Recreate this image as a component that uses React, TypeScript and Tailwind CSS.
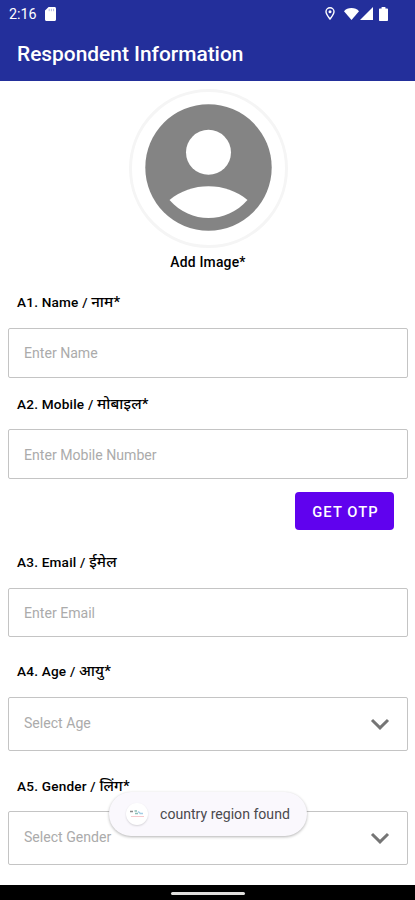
interface FieldProps {
  label: string;
  hindi: string;
  required?: boolean;
  placeholder: string;
  labelClass: string;
  boxClass: string;
  select?: boolean;
}

function StatusBar() {
  return (
    <div className="flex h-[27px] items-center pl-[9px] pr-[27px] text-white">
      <span className="pt-[2px] text-[14.300px] leading-none">2:16</span>
      <svg className="ml-[8px]" width="11" height="14" viewBox="0 0 11 14" fill="currentColor">
        <path d="M3.6 0H9.5C10.4 0 11 .6 11 1.5v11c0 .9-.6 1.5-1.5 1.5h-8C.6 14 0 13.4 0 12.5V3.6z" />
        <path d="M4.2 1.8v2.4M6.4 1.8v2.4M8.6 1.8v2.4" stroke="#b4b9e2" strokeWidth="1" />
      </svg>
      <svg className="ml-auto" width="10" height="13" viewBox="0 0 10 13" fill="none" stroke="currentColor">
        <path d="M5 12C3 9.3 1 7 1 4.700a4 4 0 0 1 8 0C9 7 7 9.300 5 12z" strokeWidth="1.400" />
        <circle cx="5" cy="4.800" r="1.500" fill="currentColor" stroke="none" />
      </svg>
      <svg className="ml-[9px]" width="15" height="12" viewBox="0 0 15 12" fill="currentColor">
        <path d="M7.500 12L0 3.300C1.700 1.100 4.400 0 7.500 0s5.800 1.100 7.500 3.300z" />
      </svg>
      <svg className="ml-[1px]" width="13" height="13" viewBox="0 0 13 13" fill="currentColor">
        <path d="M13 0v13H0z" />
      </svg>
      <svg className="ml-[6px]" width="9" height="14" viewBox="0 0 9 14" fill="currentColor">
        <path d="M2.600 0h3.800v1.400H8c.6 0 1 .4 1 1V13c0 .6-.4 1-1 1H1c-.6 0-1-.4-1-1V2.400c0-.6.4-1 1-1h1.600z" />
      </svg>
    </div>
  );
}

function Avatar() {
  return (
    <div className="flex size-[159px] items-center justify-center rounded-full border-[3px] border-[#f5f5f5] pb-[2px]">
      <svg width="127" height="127" viewBox="0 0 127 127">
        <circle cx="63.500" cy="63.500" r="63.200" fill="#848484" />
        <circle cx="63.500" cy="48.300" r="22.500" fill="#fff" />
        <path d="M24.500 96C46 77.500 81 77.500 102.500 96C81 120 46 120 24.500 96z" fill="#fff" />
      </svg>
    </div>
  );
}

function Field({ label, hindi, required, placeholder, labelClass, boxClass, select }: FieldProps) {
  return (
    <div>
      <div className={`flex items-center pl-[9px] text-[13.600px] font-medium tracking-[0.2px] text-black ${labelClass}`}>
        <p className="whitespace-nowrap leading-5">
          {label} / <span className="text-[15px] leading-none">{hindi}</span>
          {required && <span className="text-[15px] leading-none">*</span>}
        </p>
      </div>
      <div
        className={`flex items-center justify-between rounded-[2px] border-[1.500px] border-[#c4c4c4] pl-[15px] pr-[17px] text-[14.100px] text-[#ababab] ${boxClass}`}
      >
        <span>{placeholder}</span>
        {select && (
          <svg width="20" height="12" viewBox="0 0 20 12" fill="none" stroke="#757575" strokeWidth="3">
            <path d="M2 2l8 7.800L18 2" />
          </svg>
        )}
      </div>
    </div>
  );
}

function Toast() {
  return (
    <div className="absolute left-[109px] top-[792px] flex h-[44px] w-[198px] items-center rounded-[22px] bg-[#faf8fd] pl-[17px] text-[14.100px] text-[#4b4a4d] shadow-[0_1px_3px_rgba(0,0,0,0.3)]">
      <span className="flex size-[22px] items-center justify-center rounded-full bg-white shadow-[0_1px_2px_rgba(0,0,0,0.15)]">
        <svg width="16" height="10" viewBox="0 0 16 10" fill="none">
          <path d="M1 2.500h3" stroke="#8a8a8a" strokeWidth="1.500" />
          <path d="M5.500 2h2.500M6 4.500h3" stroke="#8cbcb5" strokeWidth="1.500" />
          <path d="M9 2.500l2 1.500M10.500 4.500h3.500" stroke="#a5cfe6" strokeWidth="1.500" />
          <path d="M2 7.500h13" stroke="#f6c9cc" />
        </svg>
      </span>
      <span className="ml-[12px] whitespace-nowrap pt-[2px]">country region found</span>
    </div>
  );
}

export default function App() {
  return (
    <div className="relative flex h-[900px] w-[415px] flex-col overflow-hidden bg-white font-[Roboto,'Noto_Sans',sans-serif]">
      <header className="h-[81px] shrink-0 bg-[#232f9b]">
        <StatusBar />
        <h1 className="pl-[17px] text-[20.900px] font-medium leading-[54px] text-white">Respondent Information</h1>
      </header>

      <main className="flex flex-1 flex-col pl-2 pr-[7px] pt-[8px]">
        <div className="flex flex-col items-center">
          <Avatar />
          <div className="flex h-[29px] items-center text-[13.900px] font-medium tracking-[0.2px] text-black">Add Image*</div>
        </div>

        <Field label="A1. Name" hindi="नाम" required placeholder="Enter Name" labelClass="h-[51px] pb-[2px]" boxClass="h-[50px] pt-[2px]" />
        <Field label="A2. Mobile" hindi="मोबाइल" required placeholder="Enter Mobile Number" labelClass="h-[51px]" boxClass="h-[50px] pt-[3px]" />
        <div className="flex h-[66px] items-start justify-end pr-[14px] pt-[13px]">
          <button className="h-[38px] w-[99px] rounded-[4px] bg-[#6002ee] pl-[2px] pt-[2px] text-[14.700px] font-medium tracking-[1.100px] text-white">
            GET OTP
          </button>
        </div>
        <Field label="A3. Email" hindi="ईमेल" placeholder="Enter Email" labelClass="h-[43px] pb-[9px]" boxClass="h-[49px] pt-[2px]" />
        <Field label="A4. Age" hindi="आयु" required placeholder="Select Age" labelClass="h-[60px] pt-[8px]" boxClass="h-[54px]" select />
        <Field label="A5. Gender" hindi="लिंग" required placeholder="Select Gender" labelClass="h-[60px] pt-[9px]" boxClass="h-[54px]" select />
      </main>

      <Toast />

      <footer className="flex h-[15px] shrink-0 items-center justify-center bg-black pt-[2px]">
        <div className="h-[3px] w-[74px] rounded-full bg-[#e0dfdd]" />
      </footer>
    </div>
  );
}
